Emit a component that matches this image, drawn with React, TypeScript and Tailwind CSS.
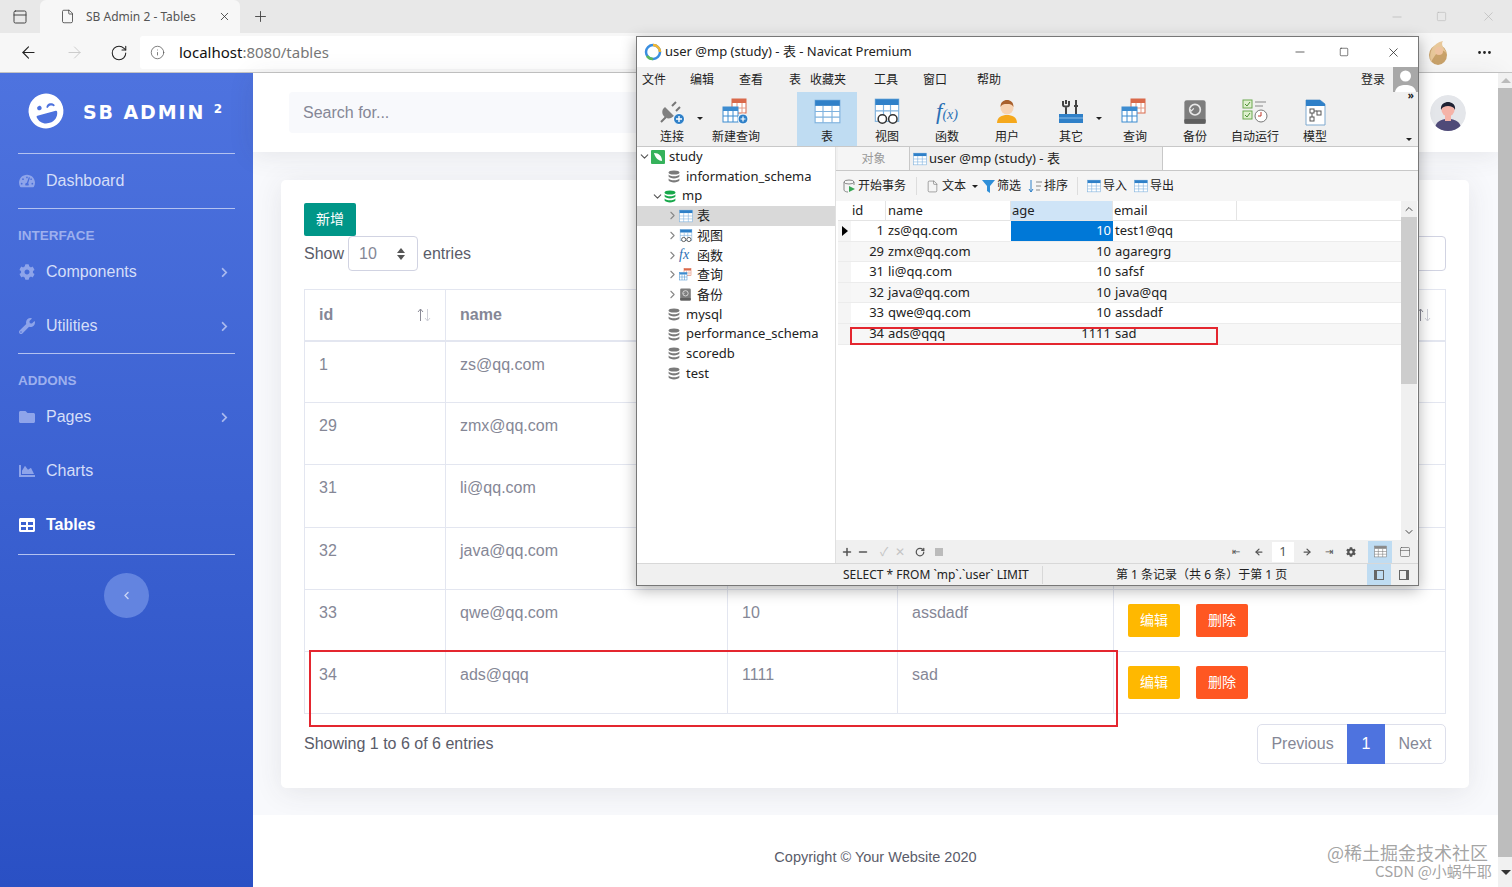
import { useState } from "react";
import { ArrowLeft, ArrowRight, RotateCw, Info, Plus, X, MoreHorizontal, Minus, Square, ChevronRight, ChevronDown, File, PanelTop } from "lucide-react";
import { FaLaughWink, FaTachometerAlt, FaCog, FaWrench, FaFolder, FaChartArea, FaTable, FaChevronRight, FaChevronLeft } from "react-icons/fa";

const rows = [
  { id: 1, name: "zs@qq.com", age: 10, email: "test1@qq" },
  { id: 29, name: "zmx@qq.com", age: 10, email: "agaregrg" },
  { id: 31, name: "li@qq.com", age: 10, email: "safsf" },
  { id: 32, name: "java@qq.com", age: 10, email: "java@qq" },
  { id: 33, name: "qwe@qq.com", age: 10, email: "assdadf" },
  { id: 34, name: "ads@qqq", age: 1111, email: "sad" },
];

const GridIcon = ({ size = 24, head = "#2f80c8", line = "#7fb2de" }: { size?: number; head?: string; line?: string }) => (
  <svg width={size} height={size} viewBox="0 0 24 24">
    <rect x="1" y="2" width="22" height="20" fill="#fff" stroke={line} />
    <rect x="1" y="2" width="22" height="5" fill={head} />
    <path d="M1 12h22M1 17h22M8 7v15M16 7v15" stroke={line} fill="none" />
  </svg>
);

const DbIcon = ({ color = "#7a7a7a" }: { color?: string }) => (
  <svg width="12" height="13" viewBox="0 0 12 13">
    <ellipse cx="6" cy="2.4" rx="5.4" ry="2" fill={color} />
    <path d="M.6 4.4c1 2.4 9.8 2.4 10.8 0v2.2c-1 2.4-9.8 2.4-10.8 0z" fill={color} />
    <path d="M.6 8.4c1 2.4 9.8 2.4 10.8 0v2.2c-1 2.4-9.8 2.4-10.8 0z" fill={color} />
  </svg>
);

const ViewIcon = ({ size = 28 }: { size?: number }) => (
  <svg width={size} height={size} viewBox="0 0 24 24">
    <rect x="2" y="1" width="20" height="19" fill="#fff" stroke="#7fb2de" />
    <rect x="2" y="1" width="20" height="5" fill="#2f80c8" />
    <path d="M2 11h20M9 6v9M15 6v9" stroke="#7fb2de" />
    <circle cx="8" cy="18" r="3.6" fill="#fff" stroke="#333" strokeWidth="1.3" />
    <circle cx="17" cy="18" r="3.6" fill="#fff" stroke="#333" strokeWidth="1.3" />
  </svg>
);

const QueryIcon = ({ size = 28, badge = false }: { size?: number; badge?: boolean }) => (
  <svg width={size} height={size} viewBox="0 0 28 28">
    <rect x="10" y="1" width="14" height="14" fill="#fff" stroke="#d9694a" />
    <rect x="10" y="1" width="14" height="4" fill="#d9694a" />
    <path d="M10 10h14M15 5v10M20 5v10" stroke="#e49a85" />
    <rect x="1" y="9" width="15" height="15" fill="#fff" stroke="#3d8cd0" />
    <rect x="1" y="9" width="15" height="4" fill="#3d8cd0" />
    <path d="M1 18h15M6 13v11M11 13v11" stroke="#3d8cd0" />
    {badge && <circle cx="21" cy="21" r="5" fill="#2f80c8" stroke="#fff" />}
    {badge && <path d="M18.5 21h5M21 18.5v5" stroke="#fff" strokeWidth="1.2" />}
  </svg>
);

const BackupIcon = ({ size = 22 }: { size?: number }) => (
  <svg width={size} height={size} viewBox="0 0 22 22">
    <rect x="2" y="1" width="18" height="20" rx="2" fill="#7d7d7d" />
    <rect x="2" y="17" width="18" height="4" rx="1" fill="#5f5f5f" />
    <circle cx="11" cy="9" r="4.5" fill="none" stroke="#e8e8e8" strokeWidth="1.4" />
    <path d="M6 8l2 2 2-2" fill="#7d7d7d" stroke="#e8e8e8" strokeWidth="1" />
  </svg>
);

const FnIcon = ({ big = false }: { big?: boolean }) =>
  big ? (
    <span className="h-[28px] flex items-center text-[#2a6fb5] italic text-[23px] leading-none [font-family:'Liberation_Serif',serif]">
      f<span className="text-[14px] mt-[6px]">(x)</span>
    </span>
  ) : (
    <span className="w-[16px] text-[#2a6fb5] italic text-[14px] leading-none [font-family:'Liberation_Serif',serif]">fx</span>
  );

const ToolIcon = ({ name }: { name: string }) => {
  if (name === "连接")
    return (
      <svg width="28" height="28" viewBox="0 0 28 28">
        <path d="M3 24l5-5M18 4l-4 4M22 9l-4 4" stroke="#777" strokeWidth="2" />
        <path d="M7 12l9 9-3 2c-3 1-6 0-8-3-1-2-1-4 0-6z" fill="#808080" transform="translate(0 -3)" />
        <circle cx="21" cy="21" r="5.5" fill="#2f80c8" stroke="#fff" />
        <path d="M18 21h6M21 18v6" stroke="#fff" strokeWidth="1.4" />
      </svg>
    );
  if (name === "新建查询") return <QueryIcon badge />;
  if (name === "表") return <GridIcon size={27} />;
  if (name === "视图") return <ViewIcon />;
  if (name === "函数") return <FnIcon big />;
  if (name === "用户")
    return (
      <svg width="24" height="28" viewBox="0 0 24 28">
        <path d="M2 25c0-6 5-8 10-8s10 2 10 8z" fill="#f5a81c" />
        <circle cx="12" cy="10" r="6.5" fill="#f7d3b3" />
        <path d="M5.5 9c0-5 3-7 6.5-7s6.5 2 6.5 7c-2-3-3-3-6.500-3s-4.500 0-6.500 3z" fill="#a8602d" />
      </svg>
    );
  if (name === "其它")
    return (
      <svg width="26" height="28" viewBox="0 0 26 28">
        <path d="M8 2v4M5 3v4c0 2 6 2 6 0V3M8 8v10M18 2v16M16 8h4" stroke="#444" strokeWidth="2" fill="none" />
        <rect x="1" y="16" width="24" height="9" fill="#2f80c8" />
        <path d="M1 20h24" stroke="#8dbde6" />
      </svg>
    );
  if (name === "查询") return <QueryIcon />;
  if (name === "备份") return <BackupIcon size={26} />;
  if (name === "自动运行")
    return (
      <svg width="28" height="28" viewBox="0 0 28 28">
        <rect x="2" y="2" width="9" height="8" fill="#dff0cf" stroke="#6aa84f" />
        <rect x="2" y="13" width="9" height="8" fill="#dff0cf" stroke="#6aa84f" />
        <path d="M4 6l2 2 3-4M4 17l2 2 3-4" stroke="#4a8f32" fill="none" />
        <path d="M14 4h11M14 8h8" stroke="#888" />
        <circle cx="20" cy="18" r="6" fill="#fff" stroke="#777" />
        <path d="M20 14v4h-3" stroke="#c0392b" fill="none" />
      </svg>
    );
  return (
    <svg width="24" height="28" viewBox="0 0 24 28">
      <path d="M3 2h14l5 4v21H3z" fill="#fff" stroke="#7fa9cf" />
      <path d="M3 2h14l5 4v2H3z" fill="#2f80c8" />
      <rect x="7" y="11" width="4" height="4" fill="none" stroke="#555" />
      <rect x="14" y="13" width="4" height="4" fill="none" stroke="#555" />
      <rect x="7" y="19" width="4" height="4" fill="none" stroke="#555" />
      <path d="M11 13h3M9 15v4" stroke="#555" />
    </svg>
  );
};

const Caret = ({ className = "" }: { className?: string }) => (
  <span className={`w-0 h-0 border-x-[3px] border-x-transparent border-t-[3px] border-t-[#222] ${className}`} />
);

const NavItem = ({ icon, label, arrow, active }: { icon: React.ReactNode; label: string; arrow?: boolean; active?: boolean }) => (
  <div className={`h-[54px] pl-[19px] pr-[23px] flex items-center text-[16px] ${active ? "text-white font-bold" : "text-[#d5def8]"}`}>
    <span className={`w-[27px] text-[16px] ${active ? "text-white" : "text-[#8ea4ea]"}`}>{icon}</span>
    <span className="flex-1">{label}</span>
    {arrow && <FaChevronRight className="text-[#a9b9ee] text-[11px]" />}
  </div>
);

const Divider = () => <div className="mx-[18px] h-px bg-[#b3c2f0]" />;

const SideHeading = ({ label }: { label: string }) => (
  <div className="h-[36px] pl-[18px] pt-[19px] text-[13.5px] leading-[16px] font-bold text-[#9db0ee] uppercase">{label}</div>
);

const Sidebar = () => (
  <aside className="w-[253px] h-full shrink-0 bg-gradient-to-b from-[#4e73df] to-[#2a50c4]">
    <div className="h-[80px] flex items-center pl-[28px]">
      <FaLaughWink className="text-white text-[36px] -rotate-[15deg] -mt-[4px]" />
      <span className="ml-[19px] text-white text-[19px] font-bold tracking-[1.9px] [font-family:'DejaVu_Sans',sans-serif] whitespace-nowrap -mt-[1px]">
        SB ADMIN <sup className="text-[12px]">2</sup>
      </span>
    </div>
    <Divider />
    <NavItem icon={<FaTachometerAlt />} label="Dashboard" />
    <Divider />
    <SideHeading label="Interface" />
    <NavItem icon={<FaCog />} label="Components" arrow />
    <NavItem icon={<FaWrench />} label="Utilities" arrow />
    <Divider />
    <SideHeading label="Addons" />
    <NavItem icon={<FaFolder />} label="Pages" arrow />
    <NavItem icon={<FaChartArea />} label="Charts" />
    <NavItem icon={<FaTable />} label="Tables" active />
    <div className="h-[2px]" />
    <Divider />
    <div className="mt-[18px] flex justify-center">
      <div className="w-[45px] h-[45px] rounded-full bg-[#6384e0] flex items-center justify-center">
        <FaChevronLeft className="text-[#c7d3f5] text-[9px]" />
      </div>
    </div>
  </aside>
);

const SortIcon = () => (
  <span className="flex text-[#c9cbd3]">
    <ArrowUp />
    <ArrowDown />
  </span>
);
const ArrowUp = () => (
  <svg width="7" height="14" viewBox="0 0 7 14">
    <path d="M3.5 13V1M1 4l2.500-3L6 4" stroke="#8a8a96" fill="none" />
  </svg>
);
const ArrowDown = () => (
  <svg width="7" height="14" viewBox="0 0 7 14">
    <path d="M3.5 1v12M1 10l2.500 3L6 10" stroke="#cfd0d8" fill="none" />
  </svg>
);

const DataTable = () => (
  <table className="mt-[18px] w-[1141px] table-fixed border-collapse text-[16px] text-[#858796]">
    <colgroup>
      <col className="w-[141px]" />
      <col className="w-[282px]" />
      <col className="w-[170px]" />
      <col className="w-[216px]" />
      <col className="w-[332px]" />
    </colgroup>
    <thead>
      <tr className="h-[51px] font-bold text-left border-b-2 border-[#e3e6f0]">
        {["id", "name", "age", "email", "操作"].map((h, i) => (
          <th key={h} className="border border-b-2 border-[#e3e6f0] px-[14px]">
            <div className="flex items-center justify-between">
              {h}
              <SortIcon />
            </div>
          </th>
        ))}
      </tr>
    </thead>
    <tbody>
      {rows.map((r) => (
        <tr key={r.id} className="h-[62.200px] align-top">
          <td className="border border-[#e3e6f0] px-[14px] pt-[11px]">{r.id}</td>
          <td className="border border-[#e3e6f0] px-[14px] pt-[11px]">{r.name}</td>
          <td className="border border-[#e3e6f0] px-[14px] pt-[11px]">{r.age}</td>
          <td className="border border-[#e3e6f0] px-[14px] pt-[11px]">{r.email}</td>
          <td className="border border-[#e3e6f0] px-[14px] pt-[14px]">
            <div className="flex gap-[16px]">
              <button className="w-[52px] h-[33px] rounded-[2px] bg-[#ffb800] text-white text-[14px]">编辑</button>
              <button className="w-[52px] h-[33px] rounded-[2px] bg-[#ff5722] text-white text-[14px]">删除</button>
            </div>
          </td>
        </tr>
      ))}
    </tbody>
  </table>
);

const Page = () => (
  <main className="flex-1 h-full flex flex-col bg-[#f8f9fc]">
    <div className="h-[79px] shrink-0 bg-white shadow-[0_3px_24px_rgba(58,59,69,0.1)] flex items-center justify-between pl-[36px] pr-[32px]">
      <div className="w-[400px] h-[41px] rounded-[4px] bg-[#f8f9fc] pl-[14px] flex items-center text-[16px] text-[#858796]">Search for...</div>
      <svg width="36" height="36" viewBox="0 0 36 36" className="rounded-full">
        <circle cx="18" cy="18" r="18" fill="#e4e6ea" />
        <path d="M5 32c2-7 8-8 13-8s11 1 13 8c-7 6-19 6-26 0z" fill="#4f4a78" />
        <rect x="15" y="20" width="6" height="6" fill="#f5b3a8" />
        <circle cx="18" cy="15" r="6.500" fill="#f5b3a8" />
        <path d="M11 15c-1-6 4-8 7-8s8 2 7 8c-1-3-4-4-7-4s-6 1-7 4z" fill="#1f2233" />
      </svg>
    </div>
    <div className="flex-1 px-[28px] pt-[28px] pr-[29px]">
      <section className="h-[608px] rounded-[5px] bg-white shadow-[0_4px_28px_rgba(58,59,69,0.1)] px-[23px] pt-[23px] text-[16px] text-[#858796]">
        <button className="block w-[52px] h-[33px] rounded-[2px] bg-[#009688] text-white text-[14px]">新增</button>
        <div className="flex items-center justify-between">
          <div className="flex items-center text-[#5a5c69]">
            Show
            <div className="ml-[4px] mr-[5px] w-[70px] h-[35px] rounded-[4px] border border-[#d1d3e2] pl-[10px] pr-[12px] flex items-center justify-between text-[#858796]">
              10
              <span className="flex flex-col gap-[2px]">
                <span className="w-0 h-0 border-x-[4px] border-x-transparent border-b-[5px] border-b-[#555]" />
                <span className="w-0 h-0 border-x-[4px] border-x-transparent border-t-[5px] border-t-[#555]" />
              </span>
            </div>
            entries
          </div>
          <div className="w-[200px] h-[35px] rounded-[4px] border border-[#d1d3e2]" />
        </div>
        <DataTable />
        <div className="mt-[10px] flex items-center justify-between">
          <span className="text-[#5a5c69]">Showing 1 to 6 of 6 entries</span>
          <div className="flex h-[40px] rounded-[5px] border border-[#dddfeb]">
            <span className="w-[89px] flex items-center justify-center">Previous</span>
            <span className="w-[38px] -my-px flex items-center justify-center bg-[#4e73df] text-white">1</span>
            <span className="w-[60px] flex items-center justify-center">Next</span>
          </div>
        </div>
      </section>
    </div>
    <footer className="h-[72px] shrink-0 bg-white flex items-center justify-center pt-[14px] text-[14.500px] text-[#5a5c69]">
      Copyright © Your Website 2020
    </footer>
  </main>
);

const tools = [
  { name: "连接", w: "w-[60px]", caret: true },
  { name: "新建查询", w: "w-[68px] ml-[-0px]" },
  { name: "表", w: "w-[60px] ml-[27px]", active: true },
  { name: "视图", w: "w-[60px]" },
  { name: "函数", w: "w-[60px]" },
  { name: "用户", w: "w-[60px]" },
  { name: "其它", w: "w-[60px] ml-[4px]", caret: true },
  { name: "查询", w: "w-[60px] ml-[4px]" },
  { name: "备份", w: "w-[60px]" },
  { name: "自动运行", w: "w-[60px]" },
  { name: "模型", w: "w-[60px]" },
];

const menus = [
  { t: "文件", w: "w-[48px]" },
  { t: "编辑", w: "w-[49px]" },
  { t: "查看", w: "w-[50px]" },
  { t: "表", w: "w-[21px]" },
  { t: "收藏夹", w: "w-[64px]" },
  { t: "工具", w: "w-[49px]" },
  { t: "窗口", w: "w-[54px]" },
  { t: "帮助", w: "w-[40px]" },
];

const TreeRow = ({ pad, chevron, icon, label, selected }: { pad: string; chevron?: "open" | "closed"; icon: React.ReactNode; label: string; selected?: boolean }) => (
  <div className={`h-[19.700px] flex items-center ${pad} ${selected ? "bg-[#d9d9d9]" : ""}`}>
    {chevron === "open" && <ChevronDown size={13} className="w-[13px] text-[#555]" />}
    {chevron === "closed" && <ChevronRight size={13} className="w-[13px] text-[#888]" />}
    <span className="w-[16px] mr-[1px] flex items-center">{icon}</span>
    <span className="ml-[1px] text-[13px] whitespace-nowrap">{label}</span>
  </div>
);

const Tree = () => (
  <div className="w-[199px] shrink-0 bg-white border-r border-[#e0e0e0] pt-[0px]">
    <TreeRow
      pad="pl-[1px]"
      chevron="open"
      icon={
        <svg width="14" height="14" viewBox="0 0 14 14">
          <rect width="14" height="14" rx="1" fill="#35b25b" />
          <path d="M3 3c5 0 8 3 8 8-3 0-7-3-8-8z" fill="#fff" />
        </svg>
      }
      label="study"
    />
    <TreeRow pad="pl-[31px]" icon={<DbIcon />} label="information_schema" />
    <TreeRow pad="pl-[14px]" chevron="open" icon={<DbIcon color="#17a84a" />} label="mp" />
    <TreeRow pad="pl-[29px]" chevron="closed" icon={<GridIcon size={14} />} label="表" selected />
    <TreeRow pad="pl-[29px]" chevron="closed" icon={<ViewIcon size={14} />} label="视图" />
    <TreeRow pad="pl-[29px]" chevron="closed" icon={<FnIcon />} label="函数" />
    <TreeRow pad="pl-[29px]" chevron="closed" icon={<QueryIcon size={14} />} label="查询" />
    <TreeRow pad="pl-[29px]" chevron="closed" icon={<BackupIcon size={13} />} label="备份" />
    <TreeRow pad="pl-[31px]" icon={<DbIcon />} label="mysql" />
    <TreeRow pad="pl-[31px]" icon={<DbIcon />} label="performance_schema" />
    <TreeRow pad="pl-[31px]" icon={<DbIcon />} label="scoredb" />
    <TreeRow pad="pl-[31px]" icon={<DbIcon />} label="test" />
  </div>
);

const SmallTool = ({ icon, label, className = "" }: { icon: React.ReactNode; label: string; className?: string }) => (
  <span className={`flex items-center gap-[2px] ${className}`}>
    {icon}
    {label}
  </span>
);

const ResultGrid = () => (
  <div className="relative flex-1 bg-white flex overflow-hidden">
    <div className="flex-1 pl-[2px]">
      <div className="h-[20px] flex border-b border-[#e4e4e4] text-[13px]">
        <span className="w-[13px]" />
        <span className="w-[35px] pl-[1px] border-r border-[#e4e4e4]">id</span>
        <span className="w-[125px] pl-[2px] border-r border-[#e4e4e4]">name</span>
        <span className="w-[102px] pl-[1px] border-r border-[#e4e4e4] bg-[#cfe4f7]">age</span>
        <span className="w-[124px] pl-[1px] border-r border-[#e4e4e4]">email</span>
      </div>
      {rows.map((r, i) => (
        <div key={r.id} className={`h-[20.600px] flex items-center text-[13px] border-b ${i % 2 ? "bg-[#f7f7f7]" : "bg-white"} border-[#ececec]`}>
          <span className="w-[13px] h-full flex items-center justify-center bg-[#f5f5f5]">
            {i === 0 && <span className="w-0 h-0 border-y-[5px] border-y-transparent border-l-[6px] border-l-black" />}
          </span>
          <span className="w-[35px] pr-[2px] text-right">{r.id}</span>
          <span className="w-[125px] pl-[2px]">{r.name}</span>
          <span className={`w-[102px] h-full pr-[2px] text-right ${i === 0 ? "bg-[#0078d7] text-white" : ""}`}>{r.age}</span>
          <span className="w-[124px] pl-[2px]">{r.email}</span>
        </div>
      ))}
    </div>
    <div className="w-[16px] shrink-0 bg-[#f0f0f0] flex flex-col items-center justify-between mr-px">
      <div className="w-full">
        <div className="h-[16px] flex items-center justify-center">
          <ChevronDown size={12} className="rotate-180 text-[#444]" />
        </div>
        <div className="h-[167px] bg-[#cdcdcd]" />
      </div>
      <ChevronDown size={12} className="text-[#444] mb-[2px]" />
    </div>
    {/* red mark drawn over the result row */}
    <div className="absolute left-[14px] top-[126px] w-[368px] h-[18px] border-2 border-[#e4262f]" />
  </div>
);

const NavicatWindow = () => (
  <div className="absolute left-[636px] top-[36px] w-[783px] h-[550px] flex flex-col bg-[#f0f0f0] border border-[#777] shadow-[0_4px_14px_rgba(0,0,0,0.3)] text-[#222] [font-family:'Noto_Sans','Noto_Sans_CJK_SC',sans-serif]">
    <div className="h-[30px] shrink-0 bg-white flex items-center pl-[7px] text-[13px]">
      <svg width="18" height="18" viewBox="0 0 18 18">
        <circle cx="9" cy="9" r="7" fill="none" stroke="#3a8ee0" strokeWidth="2.500" />
        <path d="M9 2a7 7 0 017 7" fill="none" stroke="#f2b632" strokeWidth="2.500" />
        <path d="M3 13a7 7 0 006 3" fill="none" stroke="#5cb85c" strokeWidth="2.500" />
      </svg>
      <span className="ml-[3px] flex-1">user @mp (study) - 表 - Navicat Premium</span>
      <Minus size={14} strokeWidth={1.2} className="mr-[32px]" />
      <Square size={10} strokeWidth={1.4} className="mr-[37px]" />
      <X size={15} strokeWidth={1.2} className="mr-[17px]" />
    </div>
    <div className="h-[25px] shrink-0 flex items-center pl-[5px] text-[12px] relative">
      {menus.map((m) => (
        <span key={m.t} className={m.w}>{m.t}</span>
      ))}
      <span className="ml-auto mr-[33px]">登录</span>
      <div className="absolute right-0 top-0 w-[25px] h-[25px] bg-[#a8a8a8] overflow-hidden">
        <svg width="25" height="25" viewBox="0 0 25 25">
          <circle cx="12.500" cy="9" r="5.500" fill="#fff" />
          <path d="M2 25c1-6 6-7 10.500-7S22 19 23 25z" fill="#fff" />
        </svg>
      </div>
    </div>
    <div className="h-[55px] shrink-0 flex pl-[5px] text-[12px] border-b border-[#c8c8c8] relative">
      {tools.map((t) => (
        <div key={t.name} className={`${t.w} relative flex flex-col items-center pt-[5px] ${t.active ? "bg-[#bfdcf2]" : ""}`}>
          <span className="h-[29px] flex items-center">
            <ToolIcon name={t.name} />
          </span>
          <span className="mt-[2px] whitespace-nowrap">{t.name}</span>
          {t.caret && <Caret className="absolute right-[-1px] top-[25px]" />}
        </div>
      ))}
      <span className="absolute right-[4px] top-[-2px] text-[10px] font-bold leading-none">»</span>
      <Caret className="absolute right-[6px] bottom-[5px]" />
    </div>
    <div className="flex-1 flex min-h-0">
      <Tree />
      <div className="flex-1 flex flex-col min-w-0">
        <div className="h-[24px] shrink-0 flex text-[13px] border-b border-[#c8c8c8]">
          <span className="ml-[2px] w-[72px] flex items-center justify-center text-[12px] text-[#999] bg-[#f5f5f5] border-r border-[#c8c8c8]">对象</span>
          <span className="w-[252px] pl-[3px] flex items-center gap-[2px]">
            <GridIcon size={14} />
            user @mp (study) - 表
          </span>
          <span className="flex-1 bg-white border-l border-[#c8c8c8]" />
        </div>
        <div className="h-[30px] shrink-0 flex items-center pl-[7px] text-[12px] bg-[#f5f5f5]">
          <SmallTool
            label="开始事务"
            icon={
              <svg width="13" height="14" viewBox="0 0 13 14">
                <ellipse cx="6" cy="3" rx="5" ry="2" fill="none" stroke="#888" />
                <path d="M1 3v8c0 1 2 2 4 2M11 3v3" fill="none" stroke="#888" />
                <path d="M6 7l6 3-6 3z" fill="#3aa655" />
              </svg>
            }
          />
          <span className="ml-[10px] h-[18px] w-px bg-[#ddd]" />
          <SmallTool className="ml-[9px]" label="文本" icon={<File size={13} strokeWidth={1.2} className="text-[#777] mr-[1px]" />} />
          <Caret className="ml-[6px]" />
          <SmallTool
            className="ml-[4px]"
            label="筛选"
            icon={
              <svg width="13" height="13" viewBox="0 0 13 13">
                <path d="M0 0h13L8 6v7L5 11V6z" fill="#2f8fd8" />
              </svg>
            }
          />
          <SmallTool
            className="ml-[7px]"
            label="排序"
            icon={
              <svg width="14" height="13" viewBox="0 0 14 13">
                <path d="M3 0v12M1 9l2 3 2-3" fill="none" stroke="#2f80c8" />
                <path d="M8 2h6M8 6h5M8 10h4" stroke="#888" />
              </svg>
            }
          />
          <span className="ml-[9px] h-[18px] w-px bg-[#ddd]" />
          <SmallTool className="ml-[9px]" label="导入" icon={<GridIcon size={14} />} />
          <SmallTool className="ml-[7px]" label="导出" icon={<GridIcon size={14} />} />
        </div>
        <ResultGrid />
        <div className="h-[23px] shrink-0 flex items-center text-[12px] text-[#555] pl-[5px] pr-[3px] bg-[#f0f0f0]">
          <Plus size={12} strokeWidth={3} className="mr-[4px]" />
          <Minus size={12} strokeWidth={3} className="mr-[6px]" />
          <span className="w-[18px] text-center text-[#c4c4c4]">✓</span>
          <span className="w-[14px] text-center text-[#c4c4c4]">✕</span>
          <RotateCw size={10} strokeWidth={3} className="ml-[8px] mr-[10px]" />
          <span className="w-[8px] h-[8px] bg-[#bbb]" />
          <span className="ml-auto text-[10px]">⇤</span>
          <ArrowLeft size={10} strokeWidth={3} className="ml-[14px]" />
          <span className="ml-[8px] w-[22px] h-[20px] bg-white text-center text-[13px]">1</span>
          <ArrowRight size={10} strokeWidth={3} className="ml-[8px]" />
          <span className="ml-[13px] text-[10px]">⇥</span>
          <FaCog className="ml-[13px] text-[10px]" />
          <span className="ml-[12px] w-[24px] h-[22px] flex items-center justify-center bg-[#bfdcf2]">
            <GridIcon size={13} head="#888" line="#777" />
          </span>
          <span className="ml-[3px] w-[20px] flex justify-center">
            <PanelTop size={12} strokeWidth={1.2} />
          </span>
        </div>
      </div>
    </div>
    <div className="h-[22px] shrink-0 flex items-center text-[12px] border-t border-[#d8d8d8]">
      <span className="w-[200px]" />
      <span className="w-[206px] pl-[6px] whitespace-nowrap border-r border-[#d8d8d8]">SELECT * FROM `mp`.`user` LIMIT</span>
      <span className="ml-[73px] flex-1">第 1 条记录（共 6 条）于第 1 页</span>
      <span className="w-[24px] h-full flex items-center justify-center bg-[#bfdcf2]">
        <span className="w-[10px] h-[10px] border border-[#666] border-l-[3px]" />
      </span>
      <span className="w-[26px] mr-[1px] flex justify-center">
        <span className="w-[10px] h-[10px] border border-[#666] border-r-[3px]" />
      </span>
    </div>
  </div>
);

const BrowserChrome = () => (
  <header className="shrink-0 [font-family:'Noto_Sans','Noto_Sans_CJK_SC',sans-serif]">
    <div className="h-[33px] bg-[#e8e8e8] flex items-end">
      <div className="w-[40px] h-full flex items-center justify-center">
        <PanelTop size={16} strokeWidth={1.5} className="text-[#444]" />
      </div>
      <div className="w-[200px] h-[33px] rounded-t-[6px] bg-[#f7f7f7] flex items-center pl-[20px] pr-[9px] text-[12px] text-[#555]">
        <File size={15} strokeWidth={1.2} className="text-[#333] mr-[11px]" />
        <span className="flex-1">SB Admin 2 - Tables</span>
        <X size={13} strokeWidth={1.5} className="text-[#333]" />
      </div>
      <div className="w-[40px] h-full flex items-center justify-center">
        <Plus size={17} strokeWidth={1.3} className="text-[#444]" />
      </div>
      <div className="ml-auto h-full flex items-center text-[#b4b4b4]">
        <Minus size={14} strokeWidth={1.2} className="mr-[32px]" />
        <Square size={11} strokeWidth={1.2} className="mr-[34px]" />
        <X size={15} strokeWidth={1} className="mr-[16px]" />
      </div>
    </div>
    <div className="h-[40px] bg-[#f7f7f7] border-b border-[#c4c4c4] flex items-center pl-[19px]">
      <ArrowLeft size={19} strokeWidth={1.4} className="text-[#222]" />
      <ArrowRight size={19} strokeWidth={1.2} className="ml-[27px] text-[#c9c9c9]" />
      <RotateCw size={18} strokeWidth={1.4} className="ml-[26px] text-[#222]" />
      <div className="ml-[12px] w-[500px] h-[33px] rounded-[3px] bg-white flex items-center pl-[10px] text-[15px]">
        <Info size={15} strokeWidth={1.2} className="text-[#555] mr-[14px]" />
        <span className="text-[#111]">localhost</span>
        <span className="text-[#777]">:8080/tables</span>
      </div>
      <div className="ml-auto flex items-center">
        <svg width="24" height="26" viewBox="0 0 24 26">
          <ellipse cx="13" cy="15" rx="9" ry="10" fill="#c9a26a" />
          <path d="M6 22C3 12 8 3 18 1c-3 4 2 8 4 13-6-8-10-2-16 8z" fill="#e8c89a" />
          <circle cx="14" cy="11" r="4" fill="#eec3a0" />
        </svg>
        <MoreHorizontal size={17} className="ml-[27px] mr-[19px] text-[#222]" />
      </div>
    </div>
  </header>
);

const PageScrollbar = () => (
  <div className="w-[15px] h-full shrink-0 bg-[#f1f1f1] flex flex-col items-center">
    <div className="h-[15px] flex items-center">
      <span className="w-0 h-0 border-x-[5px] border-x-transparent border-b-[5px] border-b-[#bbb]" />
    </div>
    <div className="w-full h-[769px] bg-[#bdbdbd]" />
    <div className="flex-1 flex items-center">
      <span className="w-0 h-0 border-x-[5px] border-x-transparent border-t-[5px] border-t-[#333]" />
    </div>
  </div>
);

export default function App() {
  const [, setOpen] = useState(false);
  return (
    <div className="relative w-[1512px] h-[887px] overflow-hidden flex flex-col bg-white [font-family:'Liberation_Sans','Noto_Sans_CJK_SC',sans-serif]" onClick={() => setOpen(false)}>
      <BrowserChrome />
      <div className="flex-1 flex min-h-0">
        <Sidebar />
        <Page />
        <PageScrollbar />
      </div>
      <NavicatWindow />
      {/* red mark over the page table */}
      <div className="absolute left-[309px] top-[650px] w-[809px] h-[77px] border-2 border-[#e4262f]" />
      {/* watermarks */}
      <div className="absolute left-[1327px] top-[840px] text-[18px] leading-[24px] text-[#8c8c8c]/80 whitespace-nowrap [font-family:'Noto_Sans_CJK_SC',sans-serif]">@稀土掘金技术社区</div>
      <div className="absolute left-[1375px] top-[860px] text-[15px] leading-[22px] text-[#8c8c8c]/80 whitespace-nowrap [font-family:'Noto_Sans_CJK_SC',sans-serif]">CSDN @小蜗牛耶</div>
    </div>
  );
}
